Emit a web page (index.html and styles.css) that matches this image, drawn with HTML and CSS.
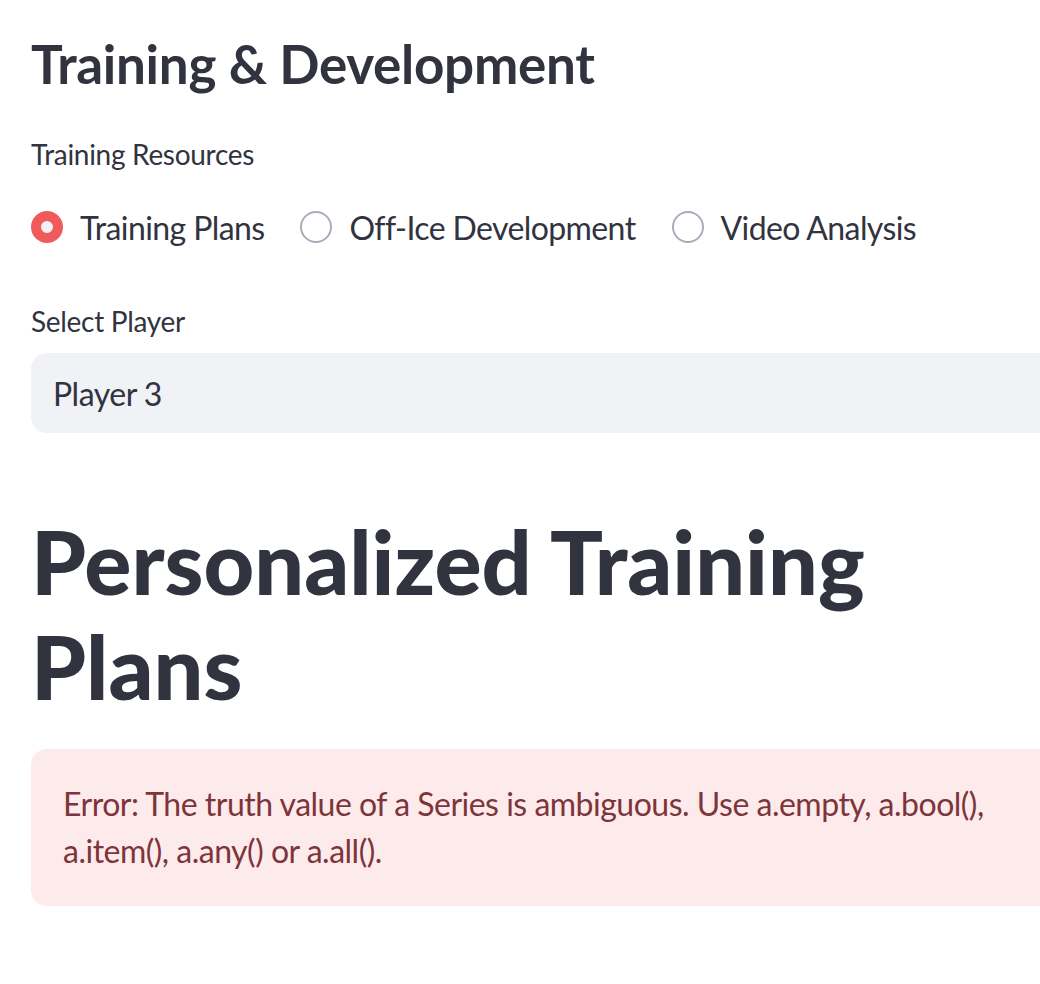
FILE: index.html
```html
<!DOCTYPE html>
<html>
<head>
<meta charset="utf-8">
<link rel="stylesheet" href="styles.css">
</head>
<body>
<main class="page">
  <h3 class="subheader">Training &amp; Development</h3>
  <div class="widget">
    <div class="label">Training Resources</div>
    <div class="radio-group">
      <label class="radio selected"><span class="dot"></span><span class="radio-text">Training Plans</span></label>
      <label class="radio"><span class="dot"></span><span class="radio-text">Off-Ice Development</span></label>
      <label class="radio"><span class="dot"></span><span class="radio-text">Video Analysis</span></label>
    </div>
  </div>
  <div class="widget select-widget">
    <div class="label">Select Player</div>
    <div class="select">Player 3</div>
  </div>
  <h1 class="title">Personalized Training Plans</h1>
  <div class="alert">Error: The truth value of a Series is ambiguous. Use a.empty, a.bool(), a.item(), a.any() or a.all().</div>
</main>
</body>
</html>
```

FILE: styles.css
```css
html, body {
  margin: 0;
  padding: 0;
  overflow: hidden;
  background: #ffffff;
}
body {
  font-family: "Lato", "Open Sans", sans-serif;
  color: #31333f;
}
.page {
  width: 1060px;
  padding: 26px 0 0 31px;
  box-sizing: border-box;
  display: flex;
  flex-direction: column;
}
.subheader {
  margin: 0;
  font-size: 53px;
  font-weight: 700;
  line-height: 76px;
  letter-spacing: -0.3px;
}
.widget {
  display: flex;
  flex-direction: column;
}
.label {
  font-size: 28px;
  line-height: 40px;
  margin-top: 32px;
  letter-spacing: -0.3px;
}
.radio-group {
  display: flex;
  gap: 36px;
  margin-top: 35px;
  height: 36px;
  align-items: center;
}
.radio {
  display: flex;
  align-items: center;
  gap: 17px;
  font-size: 32px;
  letter-spacing: -0.6px;
}
.dot {
  width: 28px;
  height: 28px;
  border-radius: 50%;
  border: 2px solid #a9adb9;
  box-sizing: content-box;
  background: #fff;
}
.radio.selected .dot {
  width: 12px;
  height: 12px;
  border: 10px solid #f05a5a;
  background: #f0f2f6;
}
.select-widget .label {
  margin-top: 56px;
}
.select {
  margin-top: 12px;
  height: 80px;
  background: #f0f2f6;
  border-radius: 16px;
  display: flex;
  align-items: center;
  padding-left: 22px;
  font-size: 32px;
  letter-spacing: -0.5px;
}
.title {
  margin: 76px 0 0 0;
  font-size: 88px;
  font-weight: 900;
  line-height: 105px;
  width: 900px;
}
.alert {
  margin-top: 30px;
  background: #fdebeb;
  color: #7d353b;
  border-radius: 16px;
  padding: 31px 32px 32px;
  font-size: 32px;
  line-height: 47px;
  letter-spacing: -0.5px;
}
```
